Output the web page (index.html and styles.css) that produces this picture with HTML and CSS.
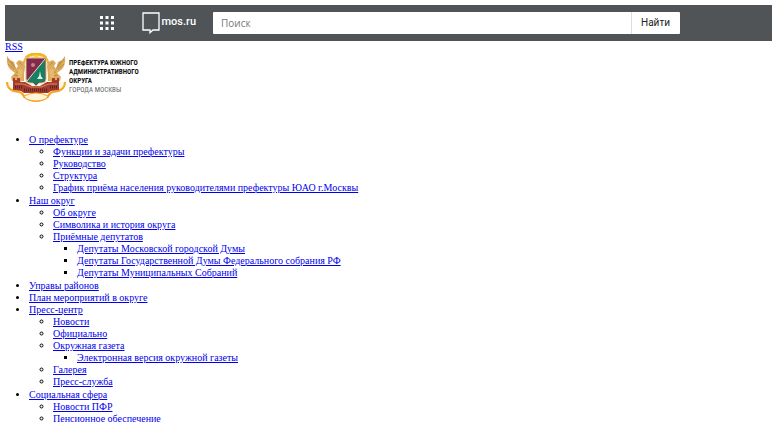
FILE: index.html
```html
<!DOCTYPE html>
<html lang="ru">
<head>
<meta charset="utf-8">
<title>Префектура Южного административного округа</title>
<link rel="stylesheet" href="styles.css">
</head>
<body>
<header class="topbar">
  <div class="topbar-inner">
    <button class="apps" type="button" aria-label="Сервисы">
      <svg width="14" height="14" viewBox="0 0 14 14" fill="#fff"><path d="M0 0h3v3H0zM5.500 0h3v3h-3zM11 0h3v3h-3zM0 5.500h3v3H0zM5.500 5.500h3v3h-3zM11 5.500h3v3h-3zM0 11h3v3H0zM5.500 11h3v3h-3zM11 11h3v3h-3z"/></svg>
    </button>
    <a class="brand" href="#">
      <svg width="18" height="22" viewBox="0 0 18 22" fill="none" stroke="#fff" stroke-width="1.300"><path d="M1 1h16v17h-6l-3 2.700V18H1z"/></svg>
      <span>mos.ru</span>
    </a>
    <form class="search">
      <input class="search-field" type="text" placeholder="Поиск" aria-label="Поиск">
      <button class="search-button" type="button">Найти</button>
    </form>
  </div>
</header>
<a class="rss" href="#">RSS</a>
<a class="logo" href="#">
  <svg class="emblem" width="60" height="50" viewBox="0 0 60 50">
    <path d="M18 9Q20 1 30 1T42 9L46 27V38L43 42H17L14 38V27Z" fill="#fff8e6" stroke="#f6b326" stroke-width="2"/>
    <path d="M20 5Q23 1 30 1T40 5" fill="none" stroke="#f6b326" stroke-width="3"/>
    <path d="M25 3l2 1 3-2 3 2 2-1-1 3h-8z" fill="#f6cf3b"/>
    <g id="beast">
      <path d="M1 3Q0 13 5 17L9 20 5 24 6 28H18V21L19 14 18 9 13 7 10 10 12 13 10 16 8 9 4 7Z" fill="#dcab5c"/>
      <path d="M2 6l6 8M2 11l6 5M5 8l5 8M13 9l3 3M10 19l5 1M8 22l6 1" stroke="#b5853d" stroke-width=".8"/>
      <path d="M12 17l3-2 2 4-3 8-4 1 2-5z" fill="#e6b96e"/>
    </g>
    <use href="#beast" transform="translate(60 0) scale(-1 1)"/>
    <path d="M1 29Q1 38 13 39Q17 40 18 44Q24 48 30 48T42 44Q43 40 47 39Q59 38 59 29" fill="#fff8e6" stroke="#f6a926" stroke-width="2"/>
    <path d="M20 5H40V26Q40 30 36 30H33L30 33 27 30H24Q20 30 20 26Z" fill="#83294d"/>
    <path d="M39 6V26Q39 29 36 29H33L30 32 27 29H21Z" fill="#168161"/>
    <path d="M21 28L39 6" stroke="#e9dfc5" stroke-width="1"/>
    <path d="M20 5H40V26Q40 30 36 30H33L30 33 27 30H24Q20 30 20 26Z" fill="none" stroke="#d9c58e"/>
    <circle cx="27" cy="12" r="2" fill="#c9827d"/>
    <path d="M34 18l1 5 2 3h-6l2-3z" fill="#dfede6"/>
    <path d="M7 28V25h2v2h2v-2h3v4h5l7 4h8l7-4h5v-4h3v2h2v-2h2v12L45 38 42 40H18L15 38 7 37Z" fill="#a53a2e"/>
    <path d="M9 34h7M18 37h24M44 34h7" stroke="#592620" stroke-width="3" stroke-dasharray="1 1"/>
    <path d="M9 31h8l8 3h10l8-3h8" fill="none" stroke="#d98a68"/>
    <path d="M18 43Q30 37 42 43L40 46Q30 50 20 46Z" fill="#fff5d9" stroke="#f4a32b"/>
  </svg>
  <span class="logo-text">Префектура Южного<br>административного<br>округа<br><span class="city">города Москвы</span></span>
</a>
<nav>
<ul class="menu">
  <li><a href="#">О префектуре</a>
    <ul class="submenu">
      <li><a href="#">Функции и задачи префектуры</a></li>
      <li><a href="#">Руководство</a></li>
      <li><a href="#">Структура</a></li>
      <li><a href="#">График приёма населения руководителями префектуры ЮАО г.Москвы</a></li>
    </ul>
  </li>
  <li><a href="#">Наш округ</a>
    <ul class="submenu">
      <li><a href="#">Об округе</a></li>
      <li><a href="#">Символика и история округа</a></li>
      <li><a href="#">Приёмные депутатов</a>
        <ul>
          <li><a href="#">Депутаты Московской городской Думы</a></li>
          <li><a href="#">Депутаты Государственной Думы Федерального собрания РФ</a></li>
          <li><a href="#">Депутаты Муниципальных Собраний</a></li>
        </ul>
      </li>
    </ul>
  </li>
  <li><a href="#">Управы районов</a></li>
  <li><a href="#">План мероприятий в округе</a></li>
  <li><a href="#">Пресс-центр</a>
    <ul class="submenu">
      <li><a href="#">Новости</a></li>
      <li><a href="#">Официально</a></li>
      <li><a href="#">Окружная газета</a>
        <ul>
          <li><a href="#">Электронная версия окружной газеты</a></li>
        </ul>
      </li>
      <li><a href="#">Галерея</a></li>
      <li><a href="#">Пресс-служба</a></li>
    </ul>
  </li>
  <li><a href="#">Социальная сфера</a>
    <ul class="submenu">
      <li><a href="#">Новости ПФР</a></li>
      <li><a href="#">Пенсионное обеспечение</a></li>
    </ul>
  </li>
</ul>
</nav>
</body>
</html>
```
FILE: styles.css
```css
* { box-sizing: border-box; }
html { overflow: hidden; }
body {
  margin: 5px;
  background: #fff;
  color: #000;
  font: 10px/12px "Liberation Serif", serif;
}
a { color: #0000ee; }
svg { display: block; flex: none; }
.topbar { background: #505457; }
.topbar-inner {
  display: flex;
  align-items: center;
  max-width: 582px;
  height: 36px;
  margin: 0 auto;
}
.apps {
  margin: 0 28px 0 2px;
  padding: 0;
  border: 0;
  background: none;
}
.brand {
  display: flex;
  gap: 2px;
  color: #fff;
  font: 500 11px/20px Roboto, sans-serif;
  text-decoration: none;
}
.search {
  display: flex;
  flex: 1;
  height: 22px;
  margin-left: 17px;
  border-radius: 1px;
  overflow: hidden;
}
.search-field {
  flex: 1;
  min-width: 0;
  padding: 0 8px;
  border: 0;
  background: #fff;
  font: 10px/12px "Open Sans", sans-serif;
}
.search-field::placeholder { color: #777; }
.search-button {
  width: 49px;
  padding: 0;
  border: 0;
  border-left: 1px solid #ddd;
  background: #fff;
  color: #222;
  font: 10px/12px Roboto, sans-serif;
}
.rss { display: block; width: max-content; }
.logo {
  display: flex;
  gap: 3px;
  width: max-content;
  padding-left: 1px;
  color: #111;
  text-decoration: none;
}
.logo-text {
  padding-top: 6px;
  font: 700 7px/9px "Roboto Condensed", Roboto, sans-serif;
  text-transform: uppercase;
}
.city { color: #666; font-weight: 400; }
ul { margin: 0; padding-left: 24px; }
.menu { margin-top: 31px; }
.submenu { padding-bottom: 1px; }
```
